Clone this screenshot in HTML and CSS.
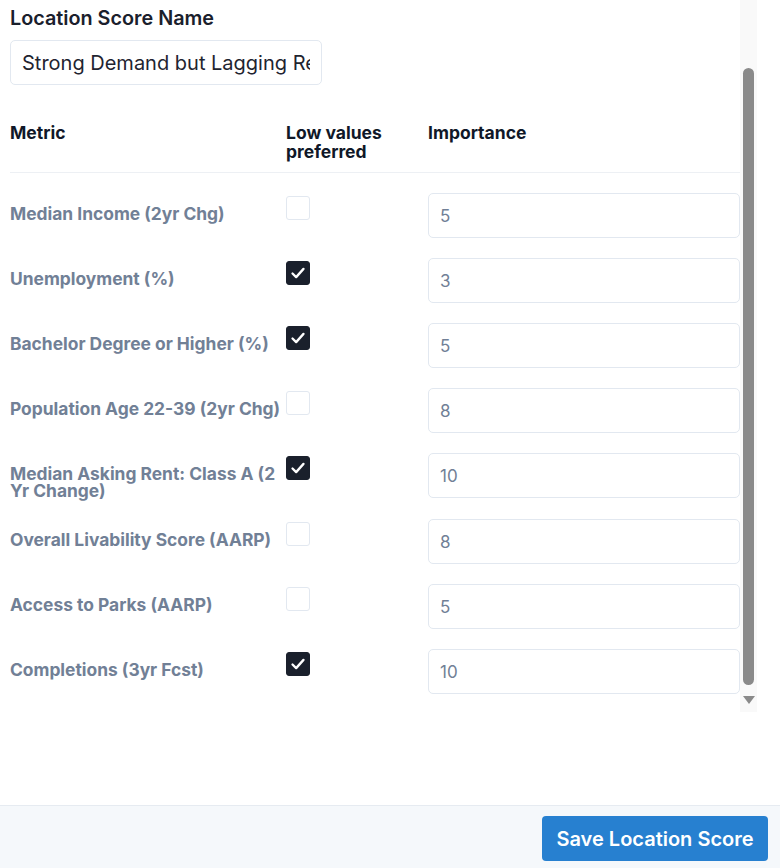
FILE: index.html
```html
<!DOCTYPE html>
<html>

<head>
    <meta http-equiv="Content-Type" content="text/html;charset=UTF-8" />
    <meta name="viewport" content="width=device-width,initial-scale=1">
    <title>Location Score</title>
    <link rel="stylesheet" href="styles.css">
</head>

<body>
    <div class="panel">
        <div class="scroll_wrap">
            <div class="form_body">
                <h2 class="field_title">Location Score Name</h2>
                <input class="name_input" type="text" value="Strong Demand but Lagging Rent Growth">

                <div class="metric_table">
                    <div class="table_head">
                        <div>Metric</div>
                        <div>Low values<br>preferred</div>
                        <div>Importance</div>
                    </div>

                    <div class="table_row">
                        <div class="metric_name">Median Income (2yr Chg)</div>
                        <div><span class="check"></span></div>
                        <div><input class="num_input" type="text" value="5"></div>
                    </div>
                    <div class="table_row">
                        <div class="metric_name">Unemployment (%)</div>
                        <div><span class="check checked"><svg viewBox="0 0 24 24"><polyline points="6,12.5 10,16.5 18,7.5" /></svg></span></div>
                        <div><input class="num_input" type="text" value="3"></div>
                    </div>
                    <div class="table_row">
                        <div class="metric_name">Bachelor Degree or Higher (%)</div>
                        <div><span class="check checked"><svg viewBox="0 0 24 24"><polyline points="6,12.5 10,16.5 18,7.5" /></svg></span></div>
                        <div><input class="num_input" type="text" value="5"></div>
                    </div>
                    <div class="table_row">
                        <div class="metric_name">Population Age 22-39 (2yr Chg)</div>
                        <div><span class="check"></span></div>
                        <div><input class="num_input" type="text" value="8"></div>
                    </div>
                    <div class="table_row">
                        <div class="metric_name">Median Asking Rent: Class A (2 Yr Change)</div>
                        <div><span class="check checked"><svg viewBox="0 0 24 24"><polyline points="6,12.5 10,16.5 18,7.5" /></svg></span></div>
                        <div><input class="num_input" type="text" value="10"></div>
                    </div>
                    <div class="table_row">
                        <div class="metric_name">Overall Livability Score (AARP)</div>
                        <div><span class="check"></span></div>
                        <div><input class="num_input" type="text" value="8"></div>
                    </div>
                    <div class="table_row">
                        <div class="metric_name">Access to Parks (AARP)</div>
                        <div><span class="check"></span></div>
                        <div><input class="num_input" type="text" value="5"></div>
                    </div>
                    <div class="table_row">
                        <div class="metric_name">Completions (3yr Fcst)</div>
                        <div><span class="check checked"><svg viewBox="0 0 24 24"><polyline points="6,12.5 10,16.5 18,7.5" /></svg></span></div>
                        <div><input class="num_input" type="text" value="10"></div>
                    </div>
                </div>
            </div>
            <div class="scrollbar">
                <div class="thumb"></div>
                <div class="arrow_down"></div>
            </div>
        </div>
        <div class="spacer"></div>
        <footer class="panel_footer">
            <button class="save_btn" type="button">Save Location Score</button>
        </footer>
    </div>
</body>

</html>
```

FILE: styles.css
```css
* {
    margin: 0;
    padding: 0;
    box-sizing: border-box;
}

html,
body {
    background: #fff;
    font-family: Inter, "Noto Sans", "Liberation Sans", sans-serif;
    color: #1a202c;
}

.panel {
    width: 780px;
    height: 868px;
    display: flex;
    flex-direction: column;
}

.scroll_wrap {
    height: 712px;
    display: flex;
    flex-direction: row;
    overflow: hidden;
}

.form_body {
    width: 740px;
    padding: 6px 0 0 10px;
}

.field_title {
    font-size: 19.8px;
    line-height: 24px;
    font-weight: 600;
    color: #1a202c;
}

.name_input {
    display: block;
    margin-top: 10px;
    width: 312px;
    height: 45px;
    padding: 0 11px;
    border: 1px solid #e2e8f0;
    border-radius: 5px;
    font-family: inherit;
    font-size: 20px;
    color: #1f2430;
    background: #fff;
    outline: none;
}

.metric_table {
    margin-top: 38px;
}

.table_head,
.table_row {
    display: grid;
    grid-template-columns: 276px 142px 1fr;
}

.table_head {
    font-size: 17.5px;
    line-height: 19px;
    font-weight: 700;
    color: #101828;
    padding-bottom: 11px;
    border-bottom: 1px solid #edf0f4;
    margin-bottom: 20px;
}

.table_row {
    padding-bottom: 20px;
}

.metric_name {
    padding-top: 12px;
    font-size: 17.4px;
    line-height: 17px;
    font-weight: 700;
    color: #718096;
}

.check {
    display: flex;
    align-items: center;
    justify-content: center;
    width: 24px;
    height: 24px;
    margin-top: 3px;
    border: 1px solid #e2e8f0;
    border-radius: 3px;
    background: #fff;
}

.check.checked {
    background: #1a202c;
    border-color: #1a202c;
}

.check svg {
    width: 24px;
    height: 24px;
    fill: none;
    stroke: #fff;
    stroke-width: 2.5;
    stroke-linecap: round;
    stroke-linejoin: round;
}

.num_input {
    display: block;
    width: 312px;
    height: 45px;
    padding: 0 11px;
    border: 1px solid #e2e8f0;
    border-radius: 5px;
    font-family: inherit;
    font-size: 17px;
    color: #718096;
    background: #fff;
    outline: none;
}

.scrollbar {
    width: 17px;
    height: 712px;
    background: #f9f9f9;
    display: flex;
    flex-direction: column;
    align-items: center;
}

.thumb {
    width: 11px;
    height: 617px;
    margin-top: 68px;
    border-radius: 6px;
    background: #8a8a8a;
}

.arrow_down {
    margin-top: 11px;
    width: 0;
    height: 0;
    border-left: 6px solid transparent;
    border-right: 6px solid transparent;
    border-top: 8px solid #8a8a8a;
}

.spacer {
    flex: 1;
}

.panel_footer {
    height: 63px;
    border-top: 1px solid #e6ebf1;
    background: #f5f8fb;
    display: flex;
    justify-content: flex-end;
    padding: 10px 12px 0 0;
}

.save_btn {
    height: 45px;
    width: 226px;
    border: none;
    border-radius: 4px;
    background: #2780d0;
    color: #fff;
    font-family: inherit;
    font-size: 20px;
    font-weight: 600;
}
```
